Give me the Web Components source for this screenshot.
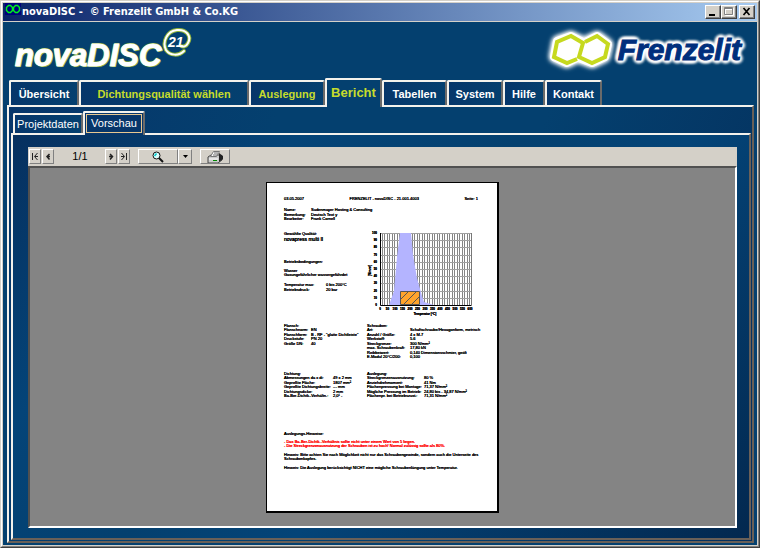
<!DOCTYPE html>
<html lang="de">
<head>
<meta charset="utf-8">
<title>novaDISC</title>
<style>
html, body { margin: 0; height: 100%; }
body { font: 11px/13px "Liberation Sans", Arial, sans-serif; --navy: #04406f; --lime: #c6dc2c; --face: #d4d0c8; }
</style>
</head>
<body>
<app-window>
  <title-bar slot="title">novaDISC - &nbsp;© Frenzelit GmbH &amp; Co.KG</title-bar>
  <brand-header></brand-header>
  <tab-strip>
    <tab-item style="--w:70px">Übersicht</tab-item>
    <tab-item class="lime" style="--w:170px">Dichtungsqualität wählen</tab-item>
    <tab-item class="lime" style="--w:76px">Auslegung</tab-item>
    <tab-item class="lime" selected style="--w:57px">Bericht</tab-item>
    <tab-item style="--w:65px">Tabellen</tab-item>
    <tab-item style="--w:56px">System</tab-item>
    <tab-item style="--w:42px">Hilfe</tab-item>
    <tab-item style="--w:57px">Kontakt</tab-item>
  </tab-strip>
  <tab-panel class="outer">
    <tab-strip class="sub">
      <tab-item sub style="--w:70px">Projektdaten</tab-item>
      <tab-item sub selected style="--w:62px">Vorschau</tab-item>
    </tab-strip>
    <tab-panel class="inner">
      <report-viewer><report-page></report-page></report-viewer>
    </tab-panel>
  </tab-panel>
</app-window>

<script>
const define = (name, html, setup) => customElements.define(name, class extends HTMLElement {
  connectedCallback() {
    if (this.shadowRoot) return;
    const t = document.createElement('template');
    t.innerHTML = html;
    this.attachShadow({ mode: 'open' }).append(t.content.cloneNode(true));
    if (setup) setup(this, this.shadowRoot);
  }
});

define('app-window', `<style>
:host { display: flex; flex-direction: column; box-sizing: border-box; min-height: 100vh; background: var(--navy);
  border: 1px solid; border-color: #d4d0c8 #404040 #404040 #d4d0c8; }
.in { flex: 1; display: flex; flex-direction: column; border: 1px solid; border-color: #fff #808080 #808080 #fff; }
.edge { flex: 1; display: flex; flex-direction: column; border: 1px solid #d4d0c8; }
main { flex: 1; display: flex; flex-direction: column; }
</style><div class="in"><div class="edge"><slot name="title"></slot><main><slot></slot></main></div></div>`);

define('title-bar', `<style>
:host { display: flex; align-items: center; height: 18px; border-bottom: 1px solid #d4d0c8; padding: 0 2px;
  background: linear-gradient(90deg, #0a246a, #a6caf0); color: #fff; }
svg { width: 16px; height: 16px; align-self: flex-start; }
h1 { flex: 1; margin: 0; padding-left: 1px; font: bold 11px/16px "DejaVu Sans Condensed", "DejaVu Sans", sans-serif; white-space: nowrap; }
button { width: 16px; height: 14px; padding: 0; display: flex; background: #d4d0c8; border: 1px solid; border-color: #fff #404040 #404040 #fff;
  box-shadow: inset -1px -1px #808080; box-sizing: border-box; }
button svg { width: 14px; height: 12px; }
.close { margin-left: 2px; }
</style>
<svg viewBox="0 0 16 16"><path fill="#00007b" d="M0 0h16v12H0z"/><path d="M3.500 2.500h2l2 2v3l-2 2h-2l-2-2v-3zM10.500 2.500h2l2 2v3l-2 2h-2l-2-2v-3z" fill="none" stroke="#00f020" stroke-width="1.500"/></svg>
<h1><slot></slot></h1>
<button aria-label="Minimieren"><svg viewBox="0 0 14 12"><path d="M3 8h6v2H3z"/></svg></button>
<button aria-label="Maximieren" disabled><svg viewBox="0 0 14 12"><path d="M3.500 2.500h8v7h-8zM3 3.500h9" fill="none" stroke="#fff"/><path d="M2.500 1.500h8v7h-8zM2 2.500h9" fill="none" stroke="#808080"/></svg></button>
<button class="close" aria-label="Schließen"><svg viewBox="0 0 14 12"><path d="M3.500 2l6 7M9.500 2l-6 7" stroke="#000" stroke-width="1.700"/></svg></button>`);

define('brand-header', `<style>
:host { display: flex; justify-content: space-between; height: 56px; padding: 0 16px 0 12px; }
.nova { display: flex; color: #fff; font: italic bold 31px/68px "Liberation Sans", sans-serif;
  text-shadow: 1px 1px 0 #8fb23c, -1px 0 0 #8fb23c, 0 -1px 0 #8fb23c, 0 0 2px #8fb23c; white-space: nowrap; }
.nova span { -webkit-text-stroke: 1px #fff; }
.nova svg { width: 30px; height: 30px; margin-top: 6px; overflow: visible; }
.nova text { font: italic bold 14px "Liberation Sans", sans-serif; text-shadow: none; }
.frenz { display: flex; align-items: center; color: #002f7c; font: italic bold 30px/58px "Liberation Sans", sans-serif; }
.frenz svg { width: 62px; height: 36px; margin-right: 6px; overflow: visible; filter: drop-shadow(0 0 2px #fff) drop-shadow(0 0 2px #fff); }
.frenz span { -webkit-text-stroke: 1px #002f7c; text-shadow: 0 0 3px #fff, 0 0 3px #fff, 0 0 4px #fff, 0 0 4px #fff, 2px 2px 3px #fff, -2px -2px 3px #fff, 2px -2px 3px #fff, -2px 2px 3px #fff, 0 0 5px #fff, 0 0 5px #fff, 3px 0 3px #fff, -3px 0 3px #fff, 0 3px 3px #fff, 0 -3px 3px #fff; }
</style>
<div class="nova"><span>novaDISC</span>
<svg viewBox="0 0 30 30"><g fill="none" stroke-linecap="round"><path d="M23 23C18 28 9 28 5 22C1 14 6 3 16 2C25 1 31 8 27 15C25 19 22 19 20 18" stroke="#8fb23c" stroke-width="4"/><path d="M23 23C18 28 9 28 5 22C1 14 6 3 16 2C25 1 31 8 27 15C25 19 22 19 20 18" stroke="#fff" stroke-width="2"/></g>
<text x="7" y="19" fill="#fff">21</text></svg></div>
<div class="frenz"><svg viewBox="0 0 62 36"><g stroke="#fff" stroke-width="8" fill="#fff" stroke-linejoin="round"><path d="M7 9L21 4L33 10L31 24L17 31L4 25zM35 10L47 4L58 12L55 25L42 31L29 26z"/></g>
<g fill="none" stroke="#c6d91f" stroke-width="4"><path d="M27 27L17 31L4 25L7 10L21 4L33 11L29 25L42 31L55 25L58 12L47 4L35 10"/></g></svg><span>Frenzelit</span></div>`);

define('tab-strip', `<style>
:host { display: flex; align-items: flex-end; height: 27px; padding-left: 6px; position: relative; z-index: 1; }
:host(.sub) { height: 22px; padding: 4px 0 0 4px; }
</style><slot></slot>`);

define('tab-item', `<style>
:host { display: block; width: var(--w); }
button { box-sizing: border-box; width: 100%; height: 25px; padding: 0; font: bold 11px/22px "Liberation Sans", sans-serif; color: #fff; white-space: nowrap;
  background: linear-gradient(100deg, #06366a, #04406f); border: 2px solid; border-bottom: 0; border-color: #f4f2ec #6a6a6a #fff #f4f2ec; border-radius: 2px 2px 0 0; display: block; }
:host(.lime) button { color: var(--lime); }
:host([selected]) { margin-bottom: -2px; }
:host([selected]) button { height: 29px; font-size: 13px; padding-bottom: 2px; background: #04406f; }
:host([sub]) button { height: 20px; font: 11px/17px "Liberation Sans", sans-serif; }
:host([sub][selected]) button { height: 24px; background: #07366a; padding: 0 1px 1px; }
:host([sub][selected]) span { display: block; border: 1px solid #e8c890; line-height: 17px; }
</style><button role="tab"><span><slot></slot></span></button>`);

define('tab-panel', `<style>
:host { flex: 1; display: flex; flex-direction: column; border: 2px solid; border-color: #f4f2ec #6a6058 #6a6058 #f4f2ec; }
:host(.outer) { margin: 0 3px 2px 4px; background: linear-gradient(110deg, #07366a 0, #04406f 30%, #04406f 60%, #052f5c 100%); }
:host(.inner) { margin: 0 1px 1px 2px; padding: 12px 12px 10px 15px; background: linear-gradient(135deg, #06305f 0, #044478 25%, #04406f 45%, #044478 60%, #03284f 100%); }
</style><slot></slot>`);

define('report-viewer', `<style>
:host { flex: 1; display: flex; flex-direction: column; }
.bar { display: flex; align-items: center; height: 19px; padding-left: 1px; background: var(--face); color: #000; font-size: 11px; }
button { box-sizing: border-box; height: 15px; width: 12px; padding: 0; margin-right: 1px; display: flex; justify-content: center; align-items: center; background: var(--face);
  border: 1px solid; border-color: #fff #808080 #808080 #fff; }
output { width: 50px; text-align: center; }
.mag { width: 40px; margin: 0 0 0 7px; } .drop { width: 14px; margin-right: 8px; } .print { width: 30px; }
svg { display: block; }
.canvas { flex: 1; display: flex; justify-content: flex-start; padding: 14px 0 13px 236px; background: #848484; border: 2px solid; border-color: #505050 #fff #fff #505050; }
</style>
<div class="bar">
<button aria-label="Erste Seite"><svg width="8" height="9" viewBox="0 0 8 9"><path d="M1.500 1v7M6.500 1L3.500 4.500L6.500 8M4 4.500h3" fill="none" stroke="#222"/></svg></button>
<button aria-label="Vorherige Seite"><svg width="8" height="9" viewBox="0 0 8 9"><path d="M5.500 2L3 4.500L5.500 7.500M3 4.500h3" fill="none" stroke="#222" stroke-width="1.500"/></svg></button>
<output>1/1</output>
<button aria-label="Nächste Seite"><svg width="8" height="9" viewBox="0 0 8 9"><path d="M3 2L5.500 4.500L3 7.500M2 4.500h3" fill="none" stroke="#222" stroke-width="1.500"/></svg></button>
<button aria-label="Letzte Seite"><svg width="8" height="9" viewBox="0 0 8 9"><path d="M6.500 1v7M1.500 1L4.500 4.500L1.500 8M1 4.500h3" fill="none" stroke="#222"/></svg></button>
<button class="mag" aria-label="Zoom"><svg width="12" height="12" viewBox="0 0 12 12"><circle cx="4.500" cy="4.500" r="3.500" fill="#dff" stroke="#111"/><path d="M2.500 5l2-2.500" stroke="#0cc" stroke-width="1.500"/><path d="M7 7l4 4" stroke="#111" stroke-width="2"/></svg></button>
<button class="drop" aria-label="Zoomstufe"><svg width="5" height="3"><path d="M0 0h5L2.500 3z"/></svg></button>
<button class="print" aria-label="Drucken"><svg width="16" height="13" viewBox="0 0 16 13"><path d="M1 7l3-2h8l3 1v4l-4 3H1z" fill="#ccc" stroke="#444"/><path d="M6.500 1.500h6l-3 5h-6z" fill="#fff" stroke="#777"/><path d="M7 3h4M6 5h4" stroke="#666"/><path d="M12 3l4 3v3l-4 3z" fill="#222"/><path d="M2 9h9" stroke="#fff"/><path d="M6 10.500h4" stroke="#080"/></svg></button>
</div>
<div class="canvas"><slot></slot></div>`);

define('data-list', `<style>
:host { display: block; }
h2 { margin: 0; font: inherit; height: 4px; }
dl { margin: 0; display: grid; grid-template-columns: minmax(var(--c, 27px), max-content) auto; grid-auto-rows: 5px 4px; white-space: nowrap; justify-content: start; }
dt, dd { margin: 0; }
dt { padding-right: 2px; }
</style><h2 hidden></h2><dl></dl>`, (el, root) => {
  const h = root.querySelector('h2');
  if (el.dataset.title) { h.hidden = false; h.textContent = el.dataset.title; }
  root.querySelector('dl').innerHTML = el.dataset.rows.split(';').map(r => r.split('|')).map(r => `<dt>${r[0]}</dt><dd>${r[1]}</dd>`).join('');
});

define('stress-chart', `<style>:host { display: block; } svg { display: block; width: 108px; height: 92px; overflow: visible; } text { font: bold 3px/3px "Liberation Sans", sans-serif; }</style><svg viewBox="0 0 108 92"></svg>`, (el, root) => {
  let s = '', y = '', x = '';
  for (let i = 2; i < 91; i += 5) s += `<path d="M${i + .5} 0v72M${i + 2.500} 0v72" stroke="#848484"/>`;
  for (let i = 0; i < 10; i++) s += `<path d="M0 ${Math.round(i * 7.2) + .5}h91" stroke="#a0a0a0"/>`;
  for (let i = 0; i <= 10; i++) y += `<text x="-3" y="${i * 7.2 + 1}" text-anchor="end">${100 - i * 10}</text>`;
  for (let i = 0; i < 13; i++) x += `<text x="${i * 7.5}" y="77" text-anchor="middle">${i * 50}</text>`;
  root.querySelector('svg').innerHTML = `<g transform="translate(13 1)">${s}
  <path d="M9 72L14 58L17 24L20 0H31L33 22L37 45L42 63L44 69L54 72z" fill="#b4b4ff"/>
  <path d="M20.500 58.500h19v13h-19z" fill="#ffa42c" stroke="#555"/><path d="M21 66l8-8M23 72l13-13M31 72l9-9" stroke="#555"/>
  <path d="M91.500 0v72" stroke="#777"/><path d="M.500 0v72.500h91" fill="none" stroke="#000"/>${y}${x}
  <text x="45" y="82" text-anchor="middle">Temperatur [°C]</text><text transform="translate(-9 43) rotate(-90)">[N/mm²]</text></g>`;
});

define('report-page', `<style>
:host { display: block; box-sizing: border-box; width: 233px; min-height: 329px; background: #fff; border: 1px solid #000; border-width: 1px 2px 2px 1px; padding: 14px 16px 0 17px;
  font: 4px/4px "Liberation Sans", sans-serif; color: #000; text-shadow: 0 0 currentColor, 0 0 currentColor; }
header { display: flex; justify-content: space-between; height: 11px; padding-right: 3px; }
.two { display: grid; grid-template-columns: 83px 1fr; }
h2, p { margin: 0; font: inherit; white-space: nowrap; }
.intro { height: 24px; }
.mid { height: 92px; }
.q { font-size: 5px; line-height: 6px; }
.gap { margin-top: 18px; } .gap2 { margin-top: 5px; } .gap3 { margin-top: 6px; }
.flange { height: 48px; } .seal { height: 60px; }
.red { color: #f00; margin: 4px 0; }
.note { margin-top: 5px; }
</style>
<header><span>03.05.2007</span><span>FRENZELIT - novaDISC - 21.001.4003</span><span>Seite: 1</span></header>
<data-list class="intro" data-rows="Name:|Sudenmayer Hosting &amp; Consulting;Bemerkung:|Deutsch Text y;Bearbeiter:|Frank Cornell"></data-list>
<div class="two mid"><div>
<h2>Gewählte Qualität:</h2><p class="q">novapress multi II</p>
<h2 class="gap">Betriebsbedingungen:</h2>
<p class="gap2">Wasser</p><p>Gasungefährlicher wassergefährdet</p>
<data-list class="gap3" style="--c:42px" data-rows="Temperatur max:|0 bis 200°C;Betriebsdruck:|20 bar"></data-list>
</div><stress-chart></stress-chart></div>
<div class="two flange">
<data-list data-title="Flansch:" data-rows="Flanschnorm:|EN;Flanschform:|B - RF - &quot;glatte Dichtleiste&quot;;Druckstufe:|PN 20;Größe DN:|40"></data-list>
<data-list data-title="Schrauben:" style="--c:43px" data-rows="Art:|Schaftschraube/Hexagonform, metrisch;Anzahl / Größe:|4 x M-7;Werkstoff:|5.6;Streckgrenze:|300 N/mm²;max. Schraubenkraft:|17,80 kN;Reibbeiwert:|0,140 Dimensionsschmier, geölt;E-Modul 20°C/200:|0,100"></data-list>
</div>
<div class="two seal">
<data-list data-title="Dichtung:" style="--c:49px" data-rows="Abmessungen da x di:|49 x 2 mm;Gepreßte Fläche:|1807 mm²;Gepreßte Dichtungsbreite:|--- mm;Dichtungsdicke:|2 mm;Ba-Ber-Dichtk.-Verhältn.:|2,0¹ -"></data-list>
<data-list data-title="Auslegung:" style="--c:54px" data-rows="Streckgrenzenausnutzung:|80 %;Anziehdrehmoment:|41 Nm;Flächenpressung bei Montage:|71,37 N/mm²;Mögliche Pressung im Betrieb:|24,80 bis - 34,87 N/mm²;Flächenpr. bei Betriebszust.:|71,31 N/mm²"></data-list>
</div>
<h2>Auslegungs-Hinweise:</h2>
<p class="red">- Das Ba-Ber-Dichtk.-Verhältnis sollte nicht unter einem Wert von 5 liegen.<br>- Die Streckgrenzenausnutzung der Schrauben ist zu hoch! Normal zulässig sollte als 80%.</p>
<p class="note">Hinweis: Bitte achten Sie nach Möglichkeit nicht nur das Schraubengewinde, sondern auch die Unterseite des<br>Schraubenkopfes.</p>
<p class="note">Hinweis: Die Auslegung berücksichtigt NICHT eine mögliche Schraubenlängung unter Temperatur.</p>`);
</script>
</body>
</html>
